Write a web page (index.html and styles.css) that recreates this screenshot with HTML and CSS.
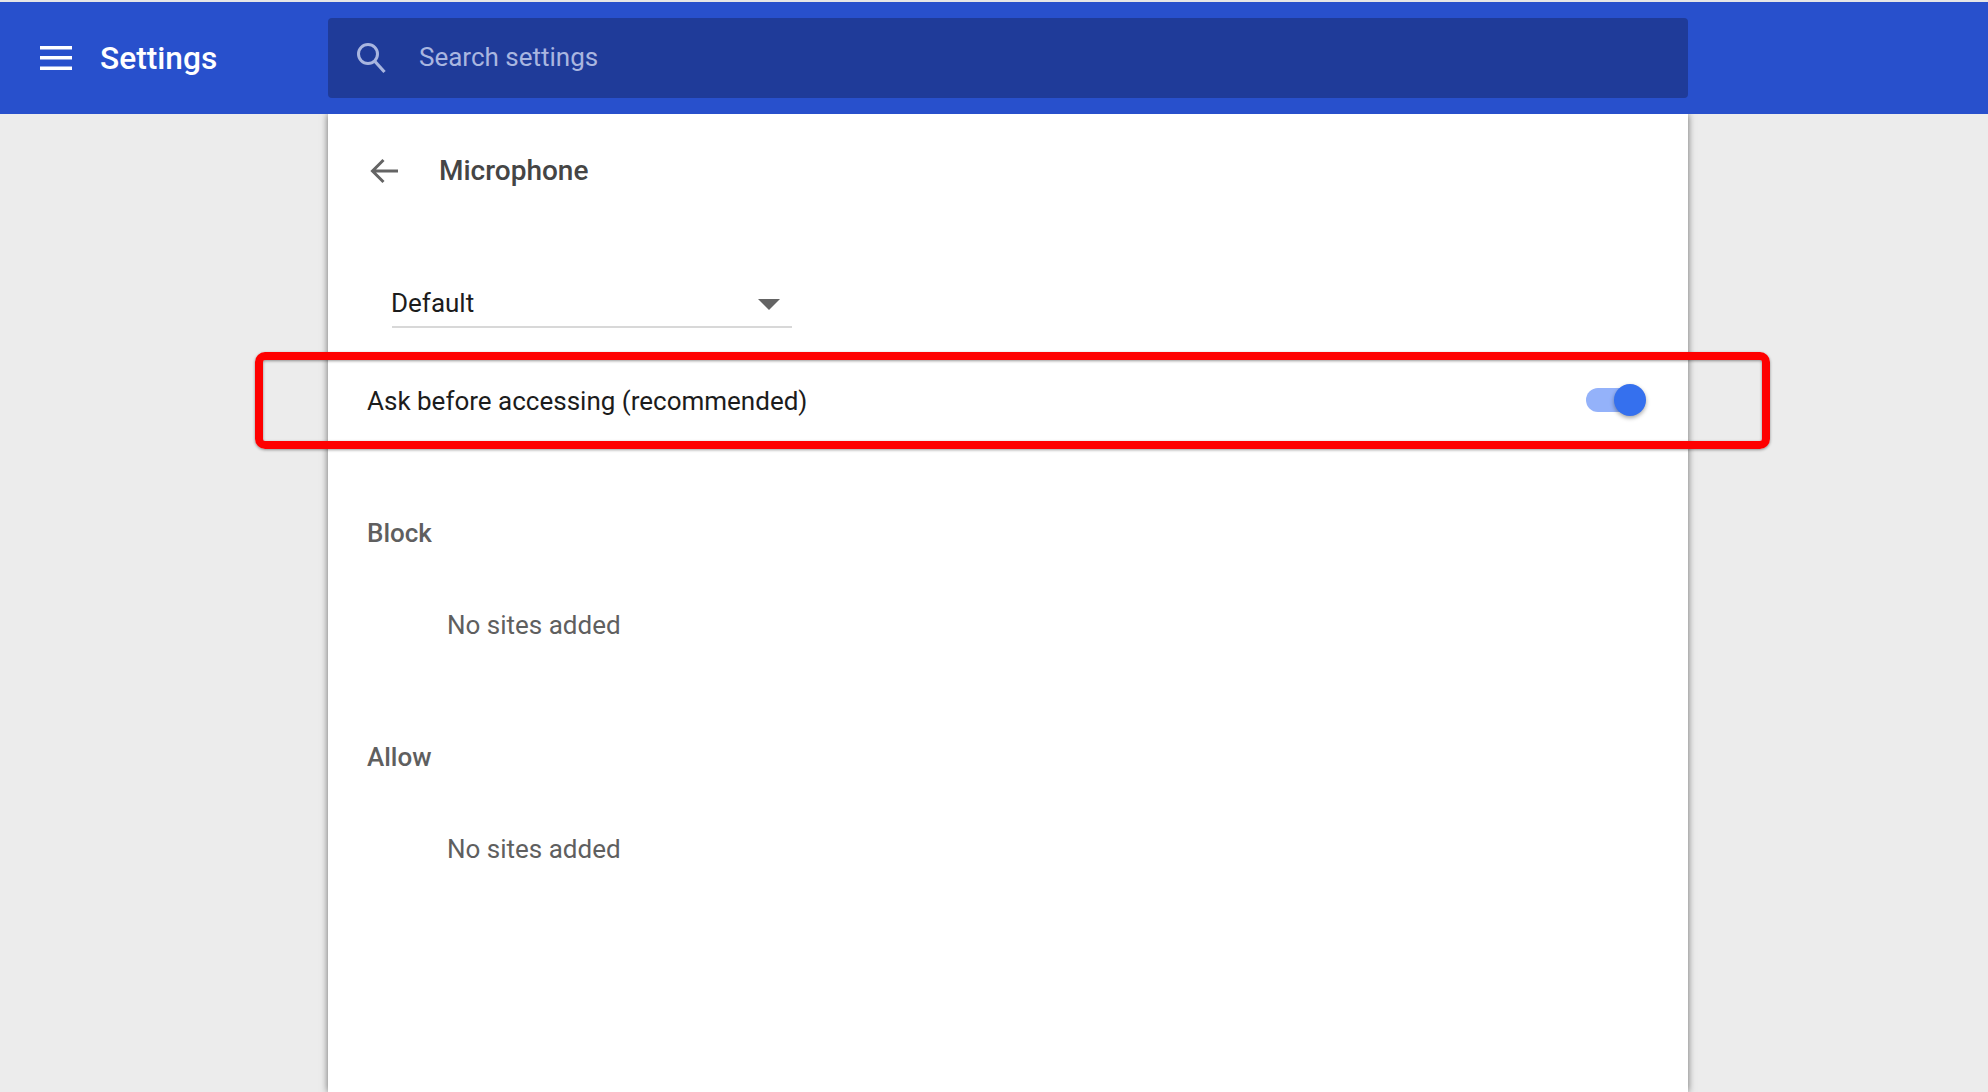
FILE: index.html
```html
<!DOCTYPE html>
<html lang="en">
<head>
<meta charset="utf-8">
<title>Settings</title>
<link rel="stylesheet" href="styles.css">
</head>
<body>
<header class="topbar">
  <div class="brand">
    <svg class="menu-icon" width="32" height="24" viewBox="0 0 32 24"><path d="M0 0h32v3.500H0zM0 10h32v3.500H0zM0 20.500h32V24H0z" fill="#fff"/></svg>
    <span class="brand-title">Settings</span>
  </div>
  <div class="search">
    <svg class="search-icon" width="30" height="32" viewBox="0 0 30 32"><circle cx="12" cy="12" r="9.500" fill="none" stroke="#a9b6e0" stroke-width="3"/><path d="M19 19.500 28.500 30" fill="none" stroke="#a9b6e0" stroke-width="3.200"/></svg>
    <span class="search-text">Search settings</span>
  </div>
</header>
<div class="layout">
  <main class="card">
    <div class="subpage-head">
      <svg class="back-icon" width="28" height="26" viewBox="0 0 28 26"><path d="M28 13H3M13.500 2 2.500 13l11 11" fill="none" stroke="#646464" stroke-width="3"/></svg>
      <h1 class="subpage-title">Microphone</h1>
    </div>
    <div class="device-select">
      <span class="device-name">Default</span>
      <svg class="caret" width="22" height="11" viewBox="0 0 22 11"><path d="M0 0h22L11 11z" fill="#646464"/></svg>
    </div>
    <div class="ask-row">
      <span>Ask before accessing (recommended)</span>
      <div class="toggle"><div class="toggle-knob"></div></div>
    </div>
    <section class="group group-block">
      <h2 class="group-title">Block</h2>
      <p class="empty">No sites added</p>
    </section>
    <section class="group group-allow">
      <h2 class="group-title">Allow</h2>
      <p class="empty">No sites added</p>
    </section>
  </main>
</div>
<div class="highlight"></div>
</body>
</html>
```
FILE: styles.css
```css
* { box-sizing: border-box; }
html, body { height: 100%; }
body {
  margin: 0;
  overflow: hidden;
  background: #ececec;
  font-family: Roboto, "Liberation Sans", sans-serif;
  position: relative;
}
.topbar {
  height: 114px;
  border-top: 2px solid #e6e6e6;
  background: #2850cc;
  display: flex;
  align-items: center;
  position: relative;
  z-index: 2;
}
.brand {
  width: 328px;
  padding-left: 40px;
  display: flex;
  align-items: center;
  color: #fff;
}
.menu-icon { margin-right: 28px; }
.brand-title { font-size: 31.700px; font-weight: 500; }
.search {
  width: 1360px;
  height: 80px;
  background: #1f3b99;
  border-radius: 4px;
  display: flex;
  align-items: center;
  padding-left: 28px;
}
.search-icon { margin-right: 33px; }
.search-text { font-size: 26px; color: #a9b6e0; margin-top: -2px; }
.layout { display: flex; padding-left: 328px; }
.card {
  width: 1360px;
  height: 978px;
  background: #fff;
  box-shadow: 0 0 7px rgba(0,0,0,.55);
}
.subpage-head {
  height: 114px;
  padding-left: 42px;
  display: flex;
  align-items: center;
}
.back-icon { margin: 0 41px 0 0; }
.subpage-title { margin: -2px 0 0; font-size: 28px; font-weight: 500; color: #454545; }
.device-select {
  margin: 38px 0 0 64px;
  width: 400px;
  height: 62px;
  padding: 14px 12px 0 0;
  border-bottom: 2px solid #d8d8d8;
  display: flex;
  align-items: center;
  justify-content: space-between;
  font-size: 26px;
  color: #1c1c1c;
}
.device-name { margin-left: -1px; }
.caret { margin-top: 2px; }
.ask-row {
  height: 84px;
  margin-top: 31px;
  padding: 0 48px 0 39px;
  display: flex;
  align-items: center;
  justify-content: space-between;
  font-size: 26px;
  color: #1c1c1c;
}
.toggle {
  position: relative;
  width: 54px;
  height: 24px;
  margin-top: -2px;
  border-radius: 12px;
  background: #94b2fa;
}
.toggle-knob {
  position: absolute;
  right: -6px;
  top: -4px;
  width: 32px;
  height: 32px;
  border-radius: 50%;
  background: #3570ee;
  box-shadow: 0 2px 4px rgba(0,0,0,.35);
}
.group { padding-left: 39px; }
.group-block { margin-top: 74px; }
.group-allow { margin-top: 100px; }
.group-title {
  margin: 0;
  font-size: 26px;
  line-height: 32px;
  font-weight: 500;
  color: #5f5f5f;
}
.empty {
  margin: 60px 0 0 80px;
  font-size: 26px;
  line-height: 32px;
  color: #5f5f5f;
}
.highlight {
  position: absolute;
  left: 255px;
  top: 352px;
  width: 1515px;
  height: 97px;
  border: 8px solid #fe0000;
  border-radius: 10px;
  box-shadow: 0 1px 3px rgba(0,0,0,.4), inset 0 1px 3px rgba(0,0,0,.4);
  z-index: 3;
}
```
